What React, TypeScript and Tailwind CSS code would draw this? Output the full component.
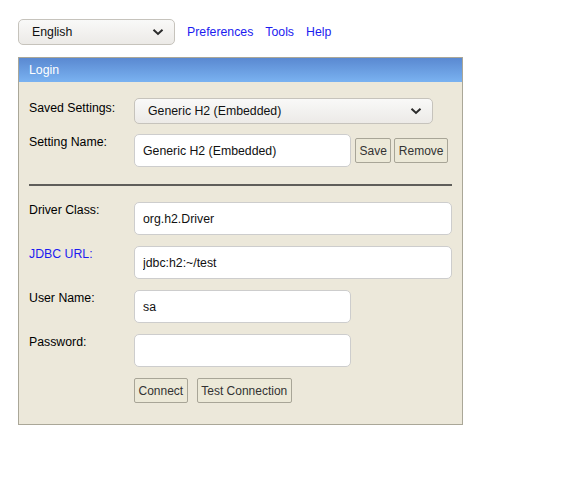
import React from "react";

const Chevron = () => (
  <svg
    width="12"
    height="8"
    viewBox="0 0 12 8"
    className="pointer-events-none absolute right-[11px] top-1/2 -translate-y-1/2"
  >
    <polyline points="1.5,1.8 6,6 10.5,1.8" fill="none" stroke="#2b2b2b" strokeWidth="2" />
  </svg>
);

function Select({ value, className }: { value: string; className: string }) {
  return (
    <div className={`relative ${className}`}>
      <select
        defaultValue={value}
        className="h-full w-full appearance-none rounded-[5px] border border-[#c6c3bc] bg-gradient-to-b from-[#f9f9f8] to-[#eceae7] pl-[13px] text-[12.3px] text-[#111] outline-none"
      >
        <option>{value}</option>
      </select>
      <Chevron />
    </div>
  );
}

function TextInput({ value, className, type = "text" }: { value: string; className: string; type?: string }) {
  return (
    <input
      type={type}
      defaultValue={value}
      className={`h-[33px] rounded-[5px] border border-[#cdcdcd] bg-white pl-[8px] text-[12.3px] text-[#111] outline-none ${className}`}
    />
  );
}

function Btn({ children, className = "" }: { children: React.ReactNode; className?: string }) {
  return (
    <button
      type="button"
      className={`h-[25px] rounded-[2px] border border-[#a8a597] bg-[#ece9d8] px-[3.5px] text-[12px] text-[#333] ${className}`}
    >
      {children}
    </button>
  );
}

function Row({ label, children, blue = false, mt, labelPt = "pt-0" }: { label: string; children: React.ReactNode; blue?: boolean; mt: string; labelPt?: string }) {
  return (
    <div className={`flex items-start ${mt}`}>
      <div className={`w-[105px] shrink-0 text-[12.3px] leading-[14px] ${blue ? "text-[#1c1cf0]" : "text-black"} ${labelPt}`}>{label}</div>
      <div className="flex flex-1 items-center">{children}</div>
    </div>
  );
}

export default function App() {
  return (
    <div className="min-h-[492px] bg-white pl-[18px] pt-[19px] font-['Liberation_Sans',Arial,sans-serif] text-[#111]">
      <div className="flex items-center">
        <Select value="English" className="h-[26px] w-[157px]" />
        <div className="ml-[12px] flex gap-[12px] text-[12.3px] text-[#1c1cf0]">
          <a href="#">Preferences</a>
          <a href="#">Tools</a>
          <a href="#">Help</a>
        </div>
      </div>

      <div className="mt-[12px] w-[445px] border border-[#aaa798] bg-[#ece8da]">
        <div className="flex h-[24px] items-center bg-gradient-to-b from-[#5a89d1] to-[#7ab2f1] pl-[10px] text-[12.3px] text-white">
          Login
        </div>
        <div className="px-[10px] pb-[21px] pt-[16px]">
          <Row label="Saved Settings:" mt="mt-0" labelPt="pt-[3px]">
            <Select value="Generic H2 (Embedded)" className="h-[26px] w-[299px]" />
          </Row>
          <Row label="Setting Name:" mt="mt-[10px]" labelPt="pt-[1px]">
            <TextInput value="Generic H2 (Embedded)" className="w-[217px]" />
            <Btn className="ml-[4px]">Save</Btn>
            <Btn className="ml-[3px]">Remove</Btn>
          </Row>

          <div className="mt-[17px] h-[2px] bg-[#5f5e5a]" />

          <Row label="Driver Class:" mt="mt-[16px]" labelPt="pt-[1px]">
            <TextInput value="org.h2.Driver" className="flex-1" />
          </Row>
          <Row label="JDBC URL:" mt="mt-[11px]" blue labelPt="pt-[1px]">
            <TextInput value="jdbc:h2:~/test" className="flex-1" />
          </Row>
          <Row label="User Name:" mt="mt-[11px]" labelPt="pt-[1px]">
            <TextInput value="sa" className="w-[217px]" />
          </Row>
          <Row label="Password:" mt="mt-[11px]" labelPt="pt-[1px]">
            <TextInput value="" type="password" className="w-[217px]" />
          </Row>
          <Row label="" mt="mt-[11px]">
            <Btn>Connect</Btn>
            <Btn className="ml-[9px]">Test Connection</Btn>
          </Row>
        </div>
      </div>
    </div>
  );
}
